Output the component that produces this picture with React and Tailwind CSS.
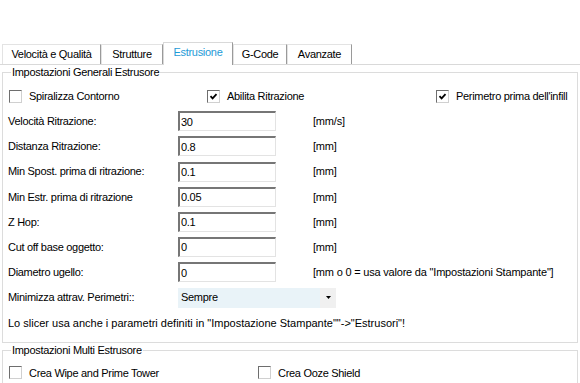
import React from "react";

const tabs = [
  { label: "Velocità e Qualità", w: "w-[99px]" },
  { label: "Strutture", w: "w-[62px]" },
  { label: "Estrusione", w: "w-[70px]", active: true },
  { label: "G-Code", w: "w-[54px]" },
  { label: "Avanzate", w: "w-[65px]" },
];

const fields = [
  { label: "Velocità Ritrazione:", value: "30", unit: "[mm/s]" },
  { label: "Distanza Ritrazione:", value: "0.8", unit: "[mm]" },
  { label: "Min Spost. prima di ritrazione:", value: "0.1", unit: "[mm]" },
  { label: "Min Estr. prima di ritrazione", value: "0.05", unit: "[mm]" },
  { label: "Z Hop:", value: "0.1", unit: "[mm]" },
  { label: "Cut off base oggetto:", value: "0", unit: "[mm]" },
  { label: "Diametro ugello:", value: "0", unit: '[mm o 0 = usa valore da "Impostazioni Stampante"]' },
];

export default function App() {
  return (
    <div className="w-[580px] h-[383px] bg-white overflow-hidden text-[11px] text-black tracking-[-0.3px] font-['Liberation_Sans',Arial,sans-serif]">
      {/* Tab strip */}
      <div className="h-[65px] pt-[42px] pl-[2px] flex items-end border-b border-[#d9d9d9]">
        {tabs.map((t) => (
          <div
            key={t.label}
            className={
              t.active
                ? `${t.w} h-[23px] -mb-px relative z-10 bg-white border-l border-t border-[#d9d9d9] border-r border-r-[#9a9a9a] flex items-center justify-center pb-[3px] text-[#1e9bd7]`
                : `${t.w} h-[20px] bg-white border-l border-t border-[#e3e3e3] border-r border-r-[#9a9a9a] flex items-center justify-center`
            }
          >
            {t.label}
          </div>
        ))}
      </div>

      {/* Impostazioni Generali Estrusore */}
      <fieldset className="mx-[2px] border border-[#dcdcdc] px-[5px] pt-[4.5px] pb-[7px]">
        <legend className="ml-[3px] px-[1px] leading-[14px]">Impostazioni Generali Estrusore</legend>
        <div className="flex h-[25.2px] items-center">
          <div className="w-[199px] pl-[1px]">
            <CheckItem label="Spiralizza Contorno" />
          </div>
          <div className="w-[229px]">
            <CheckItem label="Abilita Ritrazione" checked />
          </div>
          <CheckItem label="Perimetro prima dell'infill" checked />
        </div>
        {fields.map((f) => (
          <div key={f.label} className="flex h-[25.2px] items-center">
            <span className="w-[170px]">{f.label}</span>
            <div className="w-[98px] h-[20px] border-t-2 border-l-2 border-t-[#767676] border-l-[#767676] border-b border-r border-b-[#e3e3e3] border-r-[#e3e3e3] bg-white flex items-center pl-[1px]">
              {f.value}
            </div>
            <span className="ml-[37px] tracking-[-0.2px]">{f.unit}</span>
          </div>
        ))}
        <div className="flex h-[25.2px] items-center">
          <span className="w-[170px]">Minimizza attrav. Perimetri::</span>
          <div className="w-[158px] h-[20px] flex">
            <div className="flex-1 bg-[#e9f3f8] flex items-center pl-[3px]">Sempre</div>
            <div className="w-[16px] bg-[#f0f0f0] flex items-center justify-center">
              <svg width="5" height="3" viewBox="0 0 5 3">
                <path d="M0 0 H5 L2.5 3 Z" fill="#000" />
              </svg>
            </div>
          </div>
        </div>
        <div className="flex h-[25.2px] items-center tracking-normal">
          Lo slicer usa anche i parametri definiti in "Impostazione Stampante""-&gt;"Estrusori"!
        </div>
      </fieldset>

      {/* Impostazioni Multi Estrusore */}
      <fieldset className="mx-[2px] border border-[#dcdcdc] px-[5px] pt-[3px] pb-[10px]">
        <legend className="ml-[3px] px-[1px] leading-[14px]">Impostazioni Multi Estrusore</legend>
        <div className="flex h-[25px] items-center">
          <div className="w-[250px] pl-[1px]">
            <CheckItem label="Crea Wipe and Prime Tower" />
          </div>
          <CheckItem label="Crea Ooze Shield" />
        </div>
      </fieldset>
    </div>
  );
}

function CheckItem({ label, checked }) {
  return (
    <div className="flex items-center">
      <span className="w-[13px] h-[13px] border border-t-[#6e6e6e] border-l-[#6e6e6e] border-b-[#d0d0d0] border-r-[#d0d0d0] bg-white flex items-center justify-center">
        {checked && (
          <svg width="9" height="9" viewBox="0 0 9 9">
            <path d="M1.5 4.2 L3.6 6.4 L7.5 2.2" fill="none" stroke="#000" strokeWidth="1.8" />
          </svg>
        )}
      </span>
      <span className="ml-[7px]">{label}</span>
    </div>
  );
}
